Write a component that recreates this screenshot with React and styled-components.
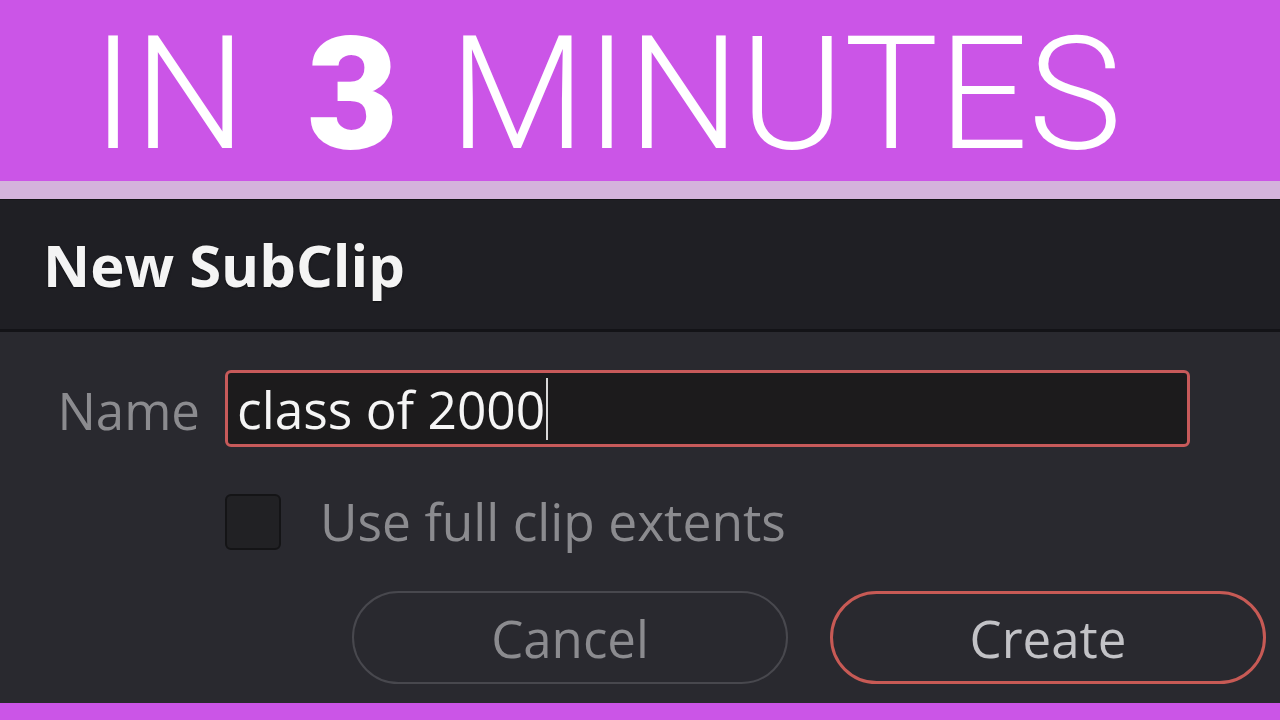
import React from "react";
import styled, { createGlobalStyle } from "styled-components";

const GlobalStyle = createGlobalStyle`
  html, body {
    margin: 0;
    padding: 0;
    background: #29292f;
  }
  * {
    box-sizing: border-box;
  }
`;

const Page = styled.div`
  width: 1280px;
  height: 720px;
  display: flex;
  flex-direction: column;
  overflow: hidden;
  font-family: "Open Sans", "Noto Sans", sans-serif;
`;

const Banner = styled.div`
  height: 181px;
  background: #cb55e7;
  display: flex;
  align-items: center;
  padding-left: 92px;
`;

const Headline = styled.h1`
  margin: 0;
  font-family: Roboto, "Liberation Sans", sans-serif;
  font-weight: 300;
  font-size: 158px;
  line-height: 1;
  color: #ffffff;
  white-space: nowrap;
  margin-top: 6px;
`;

const Heavy = styled.span`
  font-weight: 900;
  margin: 0 12px 0 22px;
`;

const Stripe = styled.div`
  height: 19px;
  background: #d4b3dc;
  border-bottom: 1px solid #151418;
`;

const Header = styled.div`
  height: 132px;
  background: #1f1f24;
  display: flex;
  align-items: center;
  padding-left: 43px;
  border-bottom: 3px solid #131317;
`;

const Title = styled.h2`
  margin: 0;
  font-size: 58px;
  font-weight: 700;
  color: #f4f4f4;
  letter-spacing: 0;
  text-shadow: 0 1px 2px rgba(0, 0, 0, 0.6);
`;

const Body = styled.div`
  flex: 1;
  background: #29292f;
  display: grid;
  grid-template-columns: 200px 965px;
  column-gap: 25px;
  align-content: start;
  padding-top: 38px;
`;

const Label = styled.div`
  font-size: 51px;
  color: #8b8b8f;
  text-align: right;
  align-self: center;
  padding-top: 2px;
`;

const Field = styled.div`
  height: 77px;
  border: 3px solid #c75a5a;
  border-radius: 6px;
  background: #1c1b1c;
  display: flex;
  align-items: center;
  padding-left: 9px;
  font-size: 51.5px;
  color: #f5f5f5;
`;

const Caret = styled.span`
  display: inline-block;
  width: 2px;
  height: 62px;
  background: #d8d8d8;
  margin-left: 1px;
`;

const CheckRow = styled.div`
  grid-column: 2;
  display: flex;
  align-items: center;
  gap: 39px;
  margin-top: 47px;
`;

const Box = styled.div`
  width: 56px;
  height: 56px;
  border-radius: 6px;
  background: #212124;
  border: 2px solid #141416;
`;

const CheckText = styled.span`
  font-size: 51.5px;
  color: #8b8b8f;
  line-height: 1;
`;

const Actions = styled.div`
  grid-column: 1 / -1;
  display: flex;
  justify-content: flex-end;
  gap: 42px;
  margin-top: 41px;
  margin-right: -76px;
`;

const Button = styled.button`
  width: 436px;
  height: 93px;
  border-radius: 47px;
  background: transparent;
  font-family: inherit;
  font-size: 51px;
  padding: 0;
  border: ${(p) => (p.primary ? "3px solid #c75a55" : "2px solid #48484e")};
  color: ${(p) => (p.primary ? "#c2c2c6" : "#8b8b8f")};
`;

const BottomBand = styled.div`
  height: 17px;
  background: #cb55e7;
`;

export default function App() {
  return (
    <Page>
      <GlobalStyle />
      <Banner>
        <Headline>
          IN <Heavy>3</Heavy> MINUTES
        </Headline>
      </Banner>
      <Stripe />
      <Header>
        <Title>New SubClip</Title>
      </Header>
      <Body>
        <Label>Name</Label>
        <Field>
          class of 2000
          <Caret />
        </Field>
        <CheckRow>
          <Box />
          <CheckText>Use full clip extents</CheckText>
        </CheckRow>
        <Actions>
          <Button>Cancel</Button>
          <Button primary>Create</Button>
        </Actions>
      </Body>
      <BottomBand />
    </Page>
  );
}
